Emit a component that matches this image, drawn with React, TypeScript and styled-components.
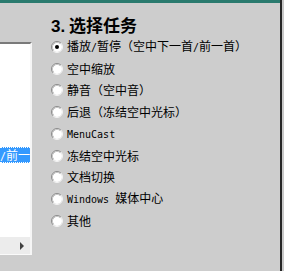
import React from 'react';
import styled, { createGlobalStyle } from 'styled-components';

const GlobalStyle = createGlobalStyle`
  html, body {
    margin: 0;
    padding: 0;
    background: #cdcdcd;
  }
  body {
    font-family: "Noto Sans CJK SC", "Liberation Sans", sans-serif;
  }
`;

type Task = {
  label: React.ReactNode;
  checked?: boolean;
};

const Latin = styled.span`
  font-family: "DejaVu Sans Mono", "Liberation Mono", monospace;
  font-size: 10px;
`;

const tasks: Task[] = [
  {
    label: (
      <>
        播放<Latin>/</Latin>暂停（空中下一首<Latin>/</Latin>前一首）
      </>
    ),
    checked: true,
  },
  { label: '空中缩放' },
  { label: '静音（空中音）' },
  { label: '后退（冻结空中光标）' },
  { label: <Latin>MenuCast</Latin> },
  { label: '冻结空中光标' },
  { label: '文档切换' },
  {
    label: (
      <>
        <Latin>Windows </Latin>媒体中心
      </>
    ),
  },
  { label: '其他' },
];

const Radio = ({ checked }: { checked?: boolean }) => (
  <RadioIcon width="12" height="12" viewBox="0 0 12 12">
    <circle cx="6" cy="6" r="5" fill="#fff" />
    <path d="M2.11 9.89 A5.5 5.5 0 0 1 9.89 2.11" fill="none" stroke="#8c8c8c" strokeWidth="1" />
    <path d="M9.89 2.11 A5.5 5.5 0 0 1 2.11 9.89" fill="none" stroke="#f4f4f4" strokeWidth="1" />
    <path d="M2.82 9.18 A4.5 4.5 0 0 1 9.18 2.82" fill="none" stroke="#c4c4c4" strokeWidth="1" />
    {checked && <circle cx="6" cy="6" r="2" fill="#000" />}
  </RadioIcon>
);

const App = () => {
  return (
    <>
      <GlobalStyle />
      <Screen>
        <Window>
          <TitleStrip />
          <Body>
            <ListPane>
              <ListArea>
                <SelectedRow>
                  <Latin>/</Latin>前一
                </SelectedRow>
              </ListArea>
              <HScroll>
                <ArrowRight />
              </HScroll>
            </ListPane>
            <Content>
              <Heading>
                <Num>3.</Num> 选择任务
              </Heading>
              <TaskList>
                {tasks.map((t, i) => (
                  <TaskRow key={i}>
                    <Radio checked={t.checked} />
                    <TaskLabel>{t.label}</TaskLabel>
                  </TaskRow>
                ))}
              </TaskList>
            </Content>
          </Body>
        </Window>
        <Edge />
        <Beyond />
      </Screen>
    </>
  );
};

const Screen = styled.div`
  width: 284px;
  height: 271px;
  display: flex;
  overflow: hidden;
  background: #cdcdcd;
`;

const Window = styled.div`
  width: 280px;
  display: flex;
  flex-direction: column;
`;

const TitleStrip = styled.div`
  height: 3px;
  background: #2a7a6e;
`;

const Body = styled.div`
  flex: 1;
  display: flex;
`;

const ListPane = styled.div`
  width: 30px;
  height: 210px;
  margin-top: 39px;
  display: flex;
  flex-direction: column;
  border-top: 2px solid #7a7a7a;
  border-right: 2px solid #f6f6f6;
  border-bottom: 1px solid #fafafa;
  background: #fff;
`;

const ListArea = styled.div`
  flex: 1;
  padding-top: 103px;
  overflow: hidden;
`;

const SelectedRow = styled.div`
  height: 14px;
  line-height: 14px;
  background: #3399ff;
  color: #fff;
  font-size: 12px;
  white-space: nowrap;
  border-top: 1px dotted #ffffff;
  border-bottom: 1px dotted #ffffff;
`;

const HScroll = styled.div`
  height: 17px;
  background: #ececec;
  display: flex;
  align-items: center;
  justify-content: flex-end;
  padding-right: 6px;
`;

const ArrowRight = styled.div`
  width: 0;
  height: 0;
  border-top: 4px solid transparent;
  border-bottom: 4px solid transparent;
  border-left: 4px solid #404040;
`;

const Content = styled.div`
  margin-left: 19px;
  display: flex;
  flex-direction: column;
`;

const Heading = styled.div`
  margin-top: 10px;
  height: 23px;
  font-size: 17px;
  font-weight: bold;
  line-height: 23px;
  color: #000;
  white-space: nowrap;
`;

const Num = styled.span`
  font-family: "Liberation Sans", sans-serif;
`;

const TaskList = styled.div`
  display: flex;
  flex-direction: column;
`;

const TaskRow = styled.div`
  height: 21.75px;
  display: flex;
  align-items: center;
  gap: 4px;
`;

const RadioIcon = styled.svg`
  flex: none;
`;

const TaskLabel = styled.span`
  font-size: 12px;
  line-height: 14px;
  color: #000;
  white-space: nowrap;
`;

const Edge = styled.div`
  width: 2px;
  background: #262626;
`;

const Beyond = styled.div`
  flex: 1;
  background: #c8c8c8;
`;

export default App;
